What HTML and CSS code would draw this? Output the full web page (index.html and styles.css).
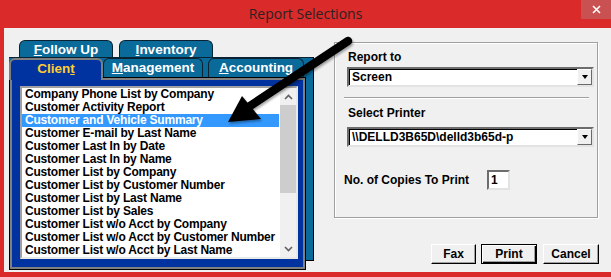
FILE: index.html
```html
<!DOCTYPE html>
<html lang="en">
<head>
    <meta charset="UTF-8">
    <title>Report Selections</title>
    <link rel="stylesheet" href="styles.css">
</head>
<body>
    <div class="window">
        <div class="titlebar">
            <span></span>
            <div class="title">Report Selections</div>
            <div class="close">
                <svg width="9" height="9" viewBox="0 0 9 9"><path d="M1 1L8 8M8 1L1 8" stroke="#fff" stroke-width="1.6"/></svg>
            </div>
        </div>
        <div class="content">
            <div class="tabs">
                <div class="back-row">
                    <div class="tab"><u>F</u>ollow Up</div>
                    <div class="tab"><u>I</u>nventory</div>
                </div>
                <div class="back-page">
                    <div class="front-row">
                        <div class="tab active">Clien<u>t</u></div>
                        <div class="tab mgmt"><u>M</u>anagement</div>
                        <div class="tab acct"><u>A</u>ccounting</div>
                    </div>
                    <div class="page">
                        <div class="listbox">
                            <ul class="items">
                                <li>Company Phone List by Company</li>
                                <li>Customer Activity Report</li>
                                <li class="selected">Customer and Vehicle Summary</li>
                                <li>Customer E-mail by Last Name</li>
                                <li>Customer Last In by Date</li>
                                <li>Customer Last In by Name</li>
                                <li>Customer List by Company</li>
                                <li>Customer List by Customer Number</li>
                                <li>Customer List by Last Name</li>
                                <li>Customer List by Sales</li>
                                <li>Customer List w/o Acct by Company</li>
                                <li>Customer List w/o Acct by Customer Number</li>
                                <li>Customer List w/o Acct by Last Name</li>
                            </ul>
                            <div class="scrollbar">
                                <div class="sb-btn">
                                    <svg width="9" height="6" viewBox="0 0 9 6"><path d="M1 5L4.5 1.5L8 5" fill="none" stroke="#606060" stroke-width="1.6"/></svg>
                                </div>
                                <div class="thumb"></div>
                                <div class="track"></div>
                                <div class="sb-btn">
                                    <svg width="9" height="6" viewBox="0 0 9 6"><path d="M1 1L4.5 4.5L8 1" fill="none" stroke="#606060" stroke-width="1.6"/></svg>
                                </div>
                            </div>
                        </div>
                    </div>
                </div>
            </div>

            <div class="side">
                <div class="group">
                    <div class="label">Report to</div>
                    <div class="combo">
                        <span class="value">Screen</span>
                        <div class="drop"><span class="tri"></span></div>
                    </div>
                    <div class="separator"></div>
                    <div class="label second">Select Printer</div>
                    <div class="combo printer">
                        <span class="value">\\DELLD3B65D\delld3b65d-p</span>
                        <div class="drop"><span class="tri"></span></div>
                    </div>
                    <div class="copies">
                        <span>No. of Copies To Print</span>
                        <div class="num">1</div>
                    </div>
                </div>
                <div class="buttons">
                    <div class="btn fax">Fax</div>
                    <div class="btn print">Print</div>
                    <div class="btn cancel">Cancel</div>
                </div>
            </div>
        </div>

        <svg class="arrow" width="611" height="277" viewBox="0 0 611 277">
            <line x1="348" y1="41" x2="250" y2="106" stroke="#000" stroke-width="8.5" stroke-linecap="round"/>
            <polygon points="228,122 242,96 261,119" fill="#000"/>
        </svg>
    </div>
</body>
</html>
```

FILE: styles.css
```css
body {
    margin: 0;
    width: 611px;
    height: 277px;
    overflow: hidden;
    font-family: "Liberation Sans", Arial, sans-serif;
}

.window {
    position: relative;
    display: flex;
    flex-direction: column;
    width: 611px;
    height: 277px;
    background-color: #da2a2a;
    box-sizing: border-box;
    padding-bottom: 5px;
}

.titlebar {
    display: grid;
    grid-template-columns: 30px 1fr 30px;
    height: 28px;
}

.title {
    text-align: center;
    font-family: "Open Sans", sans-serif;
    font-size: 14px;
    line-height: 28px;
    color: #2b2222;
}

.close {
    height: 19px;
    background-color: #c95151;
    display: flex;
    justify-content: center;
    align-items: center;
}

.content {
    flex: 1;
    display: flex;
    margin-left: 4px;
    padding: 12px 0 0 5px;
    background-color: #f0f0f0;
}

/* tabs */

.tabs {
    width: 305px;
}

.tab {
    box-sizing: border-box;
    height: 19px;
    background-color: #0a6a9a;
    border: 1px solid #0b2233;
    border-bottom: none;
    border-radius: 6px 6px 0 0;
    color: #fff;
    font-size: 13.5px;
    font-weight: bold;
    line-height: 18px;
    text-align: center;
}

.back-row {
    display: flex;
    gap: 6px;
    padding-left: 10px;
    height: 17px;
}

.back-row .tab {
    width: 94px;
}

.back-page {
    position: relative;
    width: 305px;
    box-sizing: border-box;
    background-color: #0a6a9a;
    border-top: 1px solid #0b2233;
    border-right: 1px solid #000;
    border-bottom: 1px solid #000;
}

.front-row {
    display: flex;
    height: 19px;
}

.tab.active {
    position: relative;
    z-index: 1;
    width: 94px;
    height: 22px;
    background-color: #0033a0;
    border: 2px solid #7f7f7f;
    border-bottom: none;
    color: #ffcc33;
    line-height: 18px;
}

.tab.mgmt {
    width: 100px;
}

.tab.acct {
    width: 96px;
    margin-left: 5px;
}

.page {
    width: 297px;
    height: 193px;
    box-sizing: border-box;
    margin-bottom: -10px;
    padding: 8px 7px 10px 10px;
    background-color: #0033a0;
    border: 1px solid #000;
    box-shadow: inset 0 0 0 2px #808080;
}

.listbox {
    display: flex;
    height: 100%;
    background-color: #fff;
    border: 2px solid;
    border-color: #a0a0a0 #e8e8e8 #e8e8e8 #a0a0a0;
    box-sizing: border-box;
}

.items {
    flex: 1;
    margin: 0;
    padding: 0;
    list-style: none;
    overflow: hidden;
}

.items li {
    height: 13px;
    line-height: 13px;
    padding-left: 3px;
    font-size: 12px;
    font-weight: bold;
    letter-spacing: -0.2px;
    white-space: nowrap;
    color: #000;
}

.items li.selected {
    background-color: #3399ff;
    color: #fff;
}

.scrollbar {
    width: 16px;
    margin-left: 1px;
    display: flex;
    flex-direction: column;
    background-color: #f0f0f0;
}

.sb-btn {
    height: 17px;
    display: flex;
    justify-content: center;
    align-items: center;
}

.thumb {
    height: 88px;
    background-color: #cdcdcd;
}

.track {
    flex: 1;
}

/* right side */

.side {
    width: 265px;
    margin-left: 20px;
    padding-top: 2px;
}

.group {
    width: 264px;
    height: 176px;
    box-sizing: border-box;
    padding: 7px 4px 0 9px;
    border: 1px solid #a0a0a0;
    box-shadow: inset 1px 1px 0 #fff, 1px 1px 0 #fff;
    font-size: 12px;
    font-weight: bold;
}

.label {
    margin-left: 4px;
    line-height: 14px;
}

.label.second {
    margin-top: 7px;
}

.combo {
    display: flex;
    align-items: center;
    width: 247px;
    height: 20px;
    margin-top: 3px;
    margin-left: 3px;
    box-sizing: border-box;
    background-color: #fff;
    border: 2px solid;
    border-color: #6d6d6d #e3e3e3 #e3e3e3 #6d6d6d;
    box-shadow: inset 1px 1px 0 #000;
}

.combo.printer {
    margin-top: 7px;
}

.combo .value {
    flex: 1;
    padding-left: 3px;
}

.drop {
    width: 15px;
    height: 16px;
    box-sizing: border-box;
    background-color: #f0f0f0;
    border: 1px solid;
    border-color: #fff #696969 #696969 #fff;
    display: flex;
    justify-content: center;
    align-items: center;
}

.tri {
    width: 0;
    height: 0;
    border-left: 3.5px solid transparent;
    border-right: 3.5px solid transparent;
    border-top: 4px solid #000;
}

.separator {
    width: 245px;
    height: 1px;
    margin-top: 10px;
    background-color: #a0a0a0;
    border-bottom: 1px solid #fff;
}

.copies {
    display: flex;
    align-items: center;
    height: 20px;
    margin-top: 23px;
}

.num {
    width: 23px;
    height: 20px;
    margin-left: 18px;
    box-sizing: border-box;
    padding-left: 2px;
    line-height: 16px;
    background-color: #fff;
    border: 2px solid;
    border-color: #6d6d6d #e3e3e3 #e3e3e3 #6d6d6d;
}

.buttons {
    display: flex;
    justify-content: flex-end;
    margin-top: 26px;
}

.btn {
    height: 20px;
    box-sizing: border-box;
    background-color: #f0f0f0;
    border: 1px solid;
    border-color: #fff #000 #000 #fff;
    box-shadow: inset -1px -1px 0 #a0a0a0;
    font-size: 12px;
    font-weight: bold;
    line-height: 18px;
    text-align: center;
}

.btn.fax {
    width: 45px;
}

.btn.print {
    width: 56px;
    margin-left: 5px;
    border-color: #000;
    box-shadow: inset 1px 1px 0 #fff, inset -1px -1px 0 #000, inset -2px -2px 0 #a0a0a0;
}

.btn.cancel {
    width: 56px;
    margin-left: 6px;
}

.arrow {
    position: absolute;
    top: 0;
    left: 0;
    pointer-events: none;
    filter: drop-shadow(1px 2px 1px rgba(0, 0, 0, 0.35));
}
```
